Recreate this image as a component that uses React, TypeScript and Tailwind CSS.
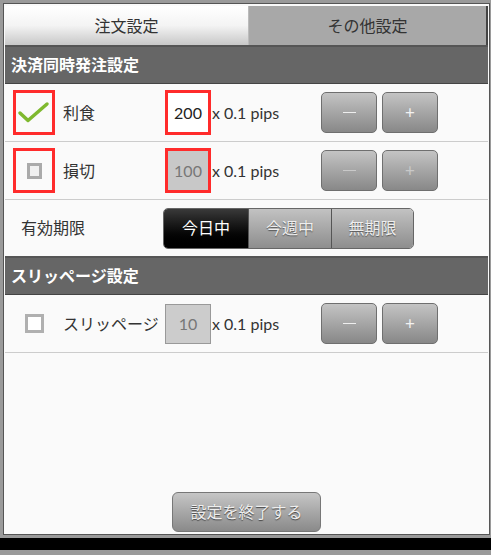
const font = "font-['Lato','Noto_Sans_CJK_JP',sans-serif]";

function StepButtons({ faded }: { faded?: boolean }) {
  const txt = faded ? "text-[#c9c9c9]" : "text-[#f2f2f2]";
  const bar = faded ? "bg-[#c9c9c9]" : "bg-[#eee]";
  return (
    <div className="flex gap-[5px]">
      <button
        type="button"
        aria-label="minus"
        className="w-[56px] h-[41px] rounded-[5px] border border-[#6f6f6f] bg-gradient-to-b from-[#c4c4c4] to-[#888] flex items-center justify-center"
      >
        <span className={`block w-[13px] h-[1.5px] ${bar}`} />
      </button>
      <button
        type="button"
        className={`w-[56px] h-[41px] rounded-[5px] border border-[#6f6f6f] bg-gradient-to-b from-[#c4c4c4] to-[#888] text-[17px] ${txt} flex items-center justify-center`}
      >
        +
      </button>
    </div>
  );
}

function RedBox({ children }: { children: React.ReactNode }) {
  return (
    <div className="w-[42px] h-[45px] border-[3px] border-[#ff2b2b] flex items-center justify-center">
      {children}
    </div>
  );
}

function SectionHeader({ title }: { title: string }) {
  return (
    <div className="h-[37px] bg-[#666] border-b border-[#444] flex items-center pl-[6px] text-white font-bold text-[16px]">
      {title}
    </div>
  );
}

export default function App() {
  return (
    <div className={`w-[491px] h-[555px] bg-[#9a9a9a] flex flex-col ${font}`}>
      <div className="h-[538px] bg-[#9a9a9a] pt-[3px] pl-[3px] pr-[1px]">
        <div className="w-[487px] h-[532px] border border-[#555] p-px flex flex-col bg-[#fafafa]">
          {/* Tabs */}
          <div className="flex h-[41px] border-b-2 border-[#555] mt-px">
            <div className="w-[243px] bg-gradient-to-b from-white via-[#f4f4f4] to-[#c8c8c8] flex items-center justify-center text-[16px] text-[#333]">
              注文設定
            </div>
            <div className="flex-1 bg-[#a8a8a8] border-l border-[#bbb] border-r-2 border-r-[#444] flex items-center justify-center text-[16px] text-[#333]">
              その他設定
            </div>
          </div>

          <SectionHeader title="決済同時発注設定" />

          {/* 利食 */}
          <div className="h-[58px] flex items-center border-b border-[#ccc] text-[16px] text-[#333]">
            <div className="ml-[8px] w-[50px]">
              <RedBox>
                <svg width="34" height="24" viewBox="0 0 34 24">
                  <path d="M3 12 L11 19.5 L30 3" fill="none" stroke="#7fb92f" strokeWidth="3.5" strokeLinecap="round" strokeLinejoin="round" />
                </svg>
              </RedBox>
            </div>
            <span className="w-[102px]">利食</span>
            <div className="w-[46px] h-[45px] border-[3px] border-[#ff2b2b] bg-white flex items-center justify-center text-[16px] text-[#222]">
              200
            </div>
            <span className="ml-[1px] w-[109px]">x 0.1 pips</span>
            <StepButtons />
          </div>

          {/* 損切 */}
          <div className="h-[58px] flex items-center border-b border-[#ccc] text-[16px] text-[#333]">
            <div className="ml-[8px] w-[50px]">
              <RedBox>
                <div className="w-[15px] h-[16px] border-[3px] border-[#aaa] bg-[#f0f0f0]" />
              </RedBox>
            </div>
            <span className="w-[102px]">損切</span>
            <div className="w-[46px] h-[45px] border-[3px] border-[#ff2b2b] bg-[#c8c8c8] flex items-center justify-center text-[16px] text-[#777]">
              100
            </div>
            <span className="ml-[1px] w-[109px]">x 0.1 pips</span>
            <StepButtons faded />
          </div>

          {/* 有効期限 */}
          <div className="h-[58px] flex items-center border-b-2 border-[#555] text-[16px] text-[#333]">
            <span className="ml-[16px] w-[142px]">有効期限</span>
            <div className="flex h-[41px] rounded-[5px] overflow-hidden border border-[#666]">
              <div className="w-[84px] bg-gradient-to-b from-[#3a3a3a] to-black text-white flex items-center justify-center">
                今日中
              </div>
              <div className="w-[83px] border-l border-[#555] bg-gradient-to-b from-[#c2c2c2] to-[#8e8e8e] text-[#eee] flex items-center justify-center [text-shadow:0_1px_1px_#555]">
                今週中
              </div>
              <div className="w-[82px] border-l border-[#555] bg-gradient-to-b from-[#c2c2c2] to-[#8e8e8e] text-[#eee] flex items-center justify-center [text-shadow:0_1px_1px_#555]">
                無期限
              </div>
            </div>
          </div>

          <SectionHeader title="スリッページ設定" />

          {/* スリッページ */}
          <div className="h-[58px] flex items-center border-b border-[#ccc] text-[16px] text-[#333]">
            <div className="ml-[20px] w-[19px] h-[19px] border-[3px] border-[#b0b0b0] bg-white" />
            <span className="ml-[19px] w-[102px] whitespace-nowrap">スリッページ</span>
            <div className="w-[46px] h-[40px] border border-[#999] bg-[#ccc] flex items-center justify-center text-[16px] text-[#777]">
              10
            </div>
            <span className="ml-[1px] w-[109px]">x 0.1 pips</span>
            <StepButtons />
          </div>

          <div className="flex-1 flex items-end justify-center pb-[1px]">
            <button
              type="button"
              className="w-[149px] h-[40px] rounded-[6px] border border-[#777] bg-gradient-to-b from-[#c6c6c6] to-[#8a8a8a] text-[16px] text-[#eee] [text-shadow:0_1px_1px_#444]"
            >
              設定を終了する
            </button>
          </div>
        </div>
      </div>
      <div className="h-[12px] bg-black" />
    </div>
  );
}
